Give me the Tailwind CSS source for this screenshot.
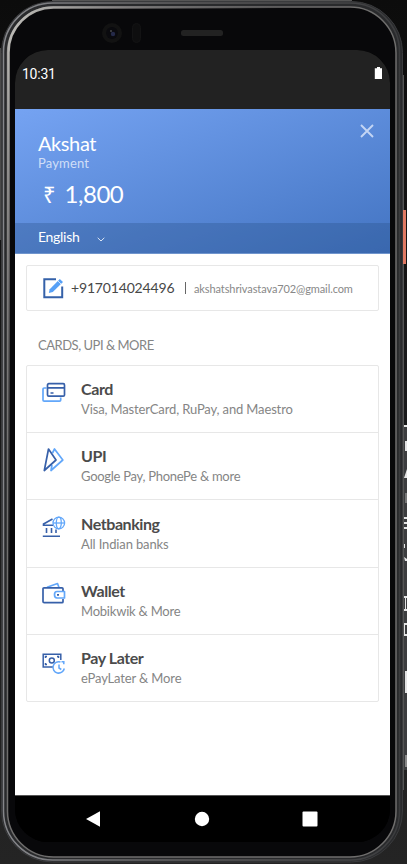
<!DOCTYPE html>
<html lang="en">
<head>
<meta charset="utf-8">
<title>Payment</title>
<script src="https://cdn.jsdelivr.net/npm/@tailwindcss/browser@4"></script>
</head>
<body class="relative w-[407px] h-[864px] overflow-hidden bg-[#111111] font-['Lato',sans-serif]">
<!-- Device frame -->
<svg class="absolute inset-0" width="407" height="864" viewBox="0 0 407 864" fill="none">
  <defs>
    <linearGradient id="bg" x1="0" y1="0" x2="0" y2="1"><stop offset="0" stop-color="#0c0c0c"/><stop offset=".5" stop-color="#1a1a1a"/><stop offset="1" stop-color="#242424"/></linearGradient>
    <linearGradient id="rim" x1="0" y1="0" x2="1" y2="0"><stop offset="0" stop-color="#85868a"/><stop offset=".5" stop-color="#5c5b5c"/><stop offset="1" stop-color="#3b3c3e"/></linearGradient>
    <linearGradient id="shine" x1="0" y1="0" x2="1" y2="1"><stop offset="0" stop-color="#c4c3be"/><stop offset=".15" stop-color="#8a8888" stop-opacity=".8"/><stop offset=".35" stop-color="#777" stop-opacity="0"/></linearGradient>
  </defs>
  <rect width="407" height="864" fill="url(#bg)"/>
  <path d="M52 .5H352" stroke="#555"/>
  <path d="M.5 48V240" stroke="#4a4a4a"/>
  <rect x="403" y="75" width="1" height="715" fill="#555"/>
  <rect x="404" y="320" width="3" height="104" fill="#191a1b"/>
  <rect x="404" y="425" width="3" height="345" fill="#3c3d3f"/>
  <rect x="403" y="210" width="3" height="54" fill="#e07963"/>
  <g fill="#e4e4e4"><rect x="404" y="425" width="3" height="2"/><rect x="405" y="441" width="2" height="10"/><path d="M404 478L407 469V478Z"/><path d="M404 517h3v2h-3zM404 522h3v2h-3zM404 527h3v2h-3zM404 544h1v4h-1zM404 557l3 2v2h-2zM404 596h3v2h-1v11h1v2h-3v-2h1v-11h-1zM404 623h3v2h-2v9h2v2h-3z"/><rect x="405" y="671" width="2" height="22"/><rect x="405" y="755" width="2" height="12" fill="#888"/><rect x="405" y="493" width="2" height="10" fill="#777"/></g>
  <rect x="1.500" y="1.500" width="401" height="860.500" rx="51" fill="#292a2c" stroke="#3a3b3d"/>
  <rect x="3.500" y="3" width="396" height="857" rx="49" stroke="url(#rim)" stroke-width="1.500"/>
  <rect x="7.500" y="7" width="388.500" height="850" rx="46" fill="#08080a" stroke="#6f6e6d" stroke-width="1.500"/>
  <rect x="8.500" y="7.500" width="387" height="848" rx="45" stroke="url(#shine)" stroke-width="2.500"/>
  <circle cx="112" cy="33" r="10" fill="#121212"/><circle cx="112" cy="33" r="6" fill="#0a0a0e"/><circle cx="113" cy="34" r="2.200" fill="#252a49"/><circle cx="111" cy="31" r=".8" fill="#777"/>
  <rect x="132.500" y="23.500" width="8" height="19" rx="4" fill="#0e0e0f" stroke="#131314"/>
  <rect x="181" y="30" width="42" height="6" rx="2.500" fill="#222"/>
</svg>

<main class="relative mt-[50px] ml-[15px] flex h-[792px] w-[375px] flex-col overflow-hidden rounded-[33px] bg-black">
  <div class="flex h-[59px] shrink-0 items-start justify-between bg-[#222222] pt-[16px] pr-[7px] pl-[7px] font-['Roboto',sans-serif] text-[14px] leading-[16px] text-white">
    <span class="tracking-[-.25px]">10:31</span>
    <svg width="9" height="12" viewBox="0 0 9 12" class="mt-[1px]" fill="#fff"><path d="M3 0h3v1.200h2V12H.8V1.200H3z"/></svg>
  </div>

  <header class="flex h-[145px] shrink-0 flex-col border-b border-[#7095cd] bg-[linear-gradient(160deg,#75a3f2_0%,#4374c2_100%)] text-white">
    <div class="flex h-[114px] justify-between pt-[15px] pr-[16px] pl-[23px]">
      <div>
        <h1 class="mt-[7px] text-[20px] leading-[24px] tracking-[-.4px]">Akshat</h1>
        <p class="text-[13px] leading-[16px] tracking-[.15px] text-white/70">Payment</p>
        <p class="mt-[8px] ml-[5px] flex gap-[9.5px] text-[24px] leading-[30px] tracking-[-.5px]"><span class="font-['Noto_Sans',sans-serif] text-[22px]">₹</span><span>1,800</span></p>
      </div>
      <svg width="14" height="14" viewBox="0 0 14 14" fill="none" stroke="#c3d5f4" stroke-width="1.900"><path d="M1 1l12 12M13 1L1 13"/></svg>
    </div>
    <div class="flex h-[30px] items-center gap-[17px] bg-[#264b80]/30 pl-[23px] text-[14px]">
      <span class="mt-[-2px] w-[42px] leading-[18px] tracking-[-.3px]">English</span>
      <svg class="mt-[2px]" width="8" height="5" viewBox="0 0 8 5" fill="none" stroke="#dce6f5"><path d="M.7.8L4 4 7.300.8"/></svg>
    </div>
  </header>

  <section class="h-[541px] shrink-0 bg-white px-[11px] pt-[11px]">
    <div class="flex h-[46px] w-[353px] items-center rounded-[2px] border border-[#e7e7e7] pl-[16px]">
      <svg width="21" height="21" viewBox="0 0 21 21" fill="none"><path d="M13 1.300H1.300V19.200H19.200V8.500" stroke="#3561a9" stroke-width="2"/><path d="M5.800 15L6.700 11.200 16.800 1 20 4 9.800 14.100z" fill="#57a0f6"/><path d="M15 3L18 6" stroke="#fff" stroke-width=".7"/></svg>
      <span class="ml-[7px] w-[104px] text-[14px] leading-[20px] tracking-[-.17px] text-[#484848]">+917014024496</span>
      <span class="ml-[10px] h-[12px] w-px bg-[#666]"></span>
      <span class="ml-[8px] pt-[2px] text-[11px] leading-[16px] tracking-[-.1px] text-[#888]">akshatshrivastava702@gmail.com</span>
    </div>
    <h2 class="mt-[26px] ml-[12px] text-[13px] leading-[16px] tracking-[-.48px] text-[#858585]">CARDS, UPI &amp; MORE</h2>
    <ul class="mt-[12px] grid h-[337px] w-[353px] grid-rows-[67px_67px_68px_67px_66px] divide-y divide-[#e7e7e7] rounded-[2px] border border-[#e7e7e7]">
      <li class="flex pt-[13px] pl-[15px]">
        <svg class="mt-[3px] shrink-0" width="24" height="24" viewBox="0 0 24 24" fill="none" stroke-width="1.700"><path d="M4.500 6H2.200Q1 6 1 7.200V18Q1 19.200 2.200 19.200H17.500Q18.700 19.200 18.700 18V15.500" stroke="#62a7fa"/><rect x="5.500" y="1.700" width="17" height="12.500" rx="1.300" stroke="#3760a9"/><path d="M5.500 5.800h17M8.500 11h3" stroke="#3760a9"/></svg>
        <div class="ml-[15px]"><h3 class="text-[16px] leading-[19px] font-bold tracking-[-.4px] text-[#4b4b4b]">Card</h3><p class="mt-[3px] text-[13px] leading-[16px] tracking-[-.14px] text-[#858585]">Visa, MasterCard, RuPay, and Maestro</p></div>
      </li>
      <li class="flex pt-[13px] pl-[15px]">
        <svg class="mt-[2px] shrink-0" width="24" height="24" viewBox="0 0 24 24" fill="none" stroke-width="1.700" stroke-linejoin="round"><path d="M10.500 5L12.500 1 20.800 12 9 22.500 10 17" stroke="#62a7fa"/><path d="M6.500 1L14 12 2.300 22.500z" stroke="#3760a9"/></svg>
        <div class="ml-[15px]"><h3 class="text-[16px] leading-[19px] font-bold tracking-[-.4px] text-[#4b4b4b]">UPI</h3><p class="mt-[3px] text-[13px] leading-[16px] tracking-[-.28px] text-[#858585]">Google Pay, PhonePe &amp; more</p></div>
      </li>
      <li class="flex pt-[14px] pl-[15px]">
        <svg class="mt-[2px] shrink-0" width="24" height="24" viewBox="0 0 24 24" fill="none" stroke-width="1.600"><path d="M10.500 3L1.500 8V9.300H11M4.500 12v5M9.500 12v5M14 13.500V17M.8 20.300H18" stroke="#3760a9"/><g stroke="#62a7fa" stroke-width="1.300"><circle cx="16.800" cy="7" r="5.800"/><ellipse cx="16.800" cy="7" rx="2.500" ry="5.800"/><path d="M11 7h11.600"/></g></svg>
        <div class="ml-[15px]"><h3 class="text-[16px] leading-[19px] font-bold tracking-[-.42px] text-[#4b4b4b]">Netbanking</h3><p class="mt-[3px] text-[13px] leading-[16px] tracking-[-.14px] text-[#858585]">All Indian banks</p></div>
      </li>
      <li class="flex pt-[13px] pl-[15px]">
        <svg class="mt-[1px] shrink-0" width="24" height="24" viewBox="0 0 24 24" fill="none" stroke-width="1.700" stroke-linejoin="round"><path d="M5 5.200L15.500 1.500 17 5.500" stroke="#62a7fa"/><path d="M21 9.500V6.800Q21 5.800 20 5.800H2Q1 5.800 1 6.800V19.500Q1 20.700 2.200 20.700H20Q21 20.700 21 19.700V17" stroke="#3760a9"/><path d="M22.500 9.500H15Q12.500 9.500 12.500 12.700T15 16H22.500z" stroke="#62a7fa"/><path d="M15 12.800h2" stroke="#3760a9"/></svg>
        <div class="ml-[15px]"><h3 class="text-[16px] leading-[19px] font-bold tracking-[-.4px] text-[#4b4b4b]">Wallet</h3><p class="mt-[3px] text-[13px] leading-[16px] tracking-[-.22px] text-[#858585]">Mobikwik &amp; More</p></div>
      </li>
      <li class="flex pt-[13px] pl-[15px]">
        <svg class="mt-[4px] shrink-0" width="24" height="24" viewBox="0 0 24 24" fill="none" stroke-width="1.500"><path d="M11 15H1.200V2.200H18.800V8" stroke="#3760a9"/><circle cx="9.800" cy="8.500" r="2.500" stroke="#3760a9"/><path d="M3.500 6V4.500H5M3.500 11v1.500H5M15 4.500h1.500V6" stroke="#3760a9"/><path d="M18.500 10A5.700 5.700 0 1 0 22.300 16.500M17 12.500V16L19.300 17.500M19.500 9.800H21.800V12.200" stroke="#62a7fa"/></svg>
        <div class="ml-[15px]"><h3 class="text-[16px] leading-[19px] font-bold tracking-[-.42px] text-[#4b4b4b]">Pay Later</h3><p class="mt-[3px] text-[13px] leading-[16px] tracking-[-.14px] text-[#858585]">ePayLater &amp; More</p></div>
      </li>
    </ul>
  </section>

  <nav class="flex h-[47px] items-start border-t border-[#555] bg-black pt-[15px] pl-[70px]">
    <svg width="233" height="16" viewBox="0 0 233 16" fill="#fff"><path d="M15 .2V15.800L1 8z"/><circle cx="117" cy="8" r="7.200"/><rect x="217.500" y=".5" width="15" height="15" rx="1"/></svg>
  </nav>
</main>
</body>
</html>
